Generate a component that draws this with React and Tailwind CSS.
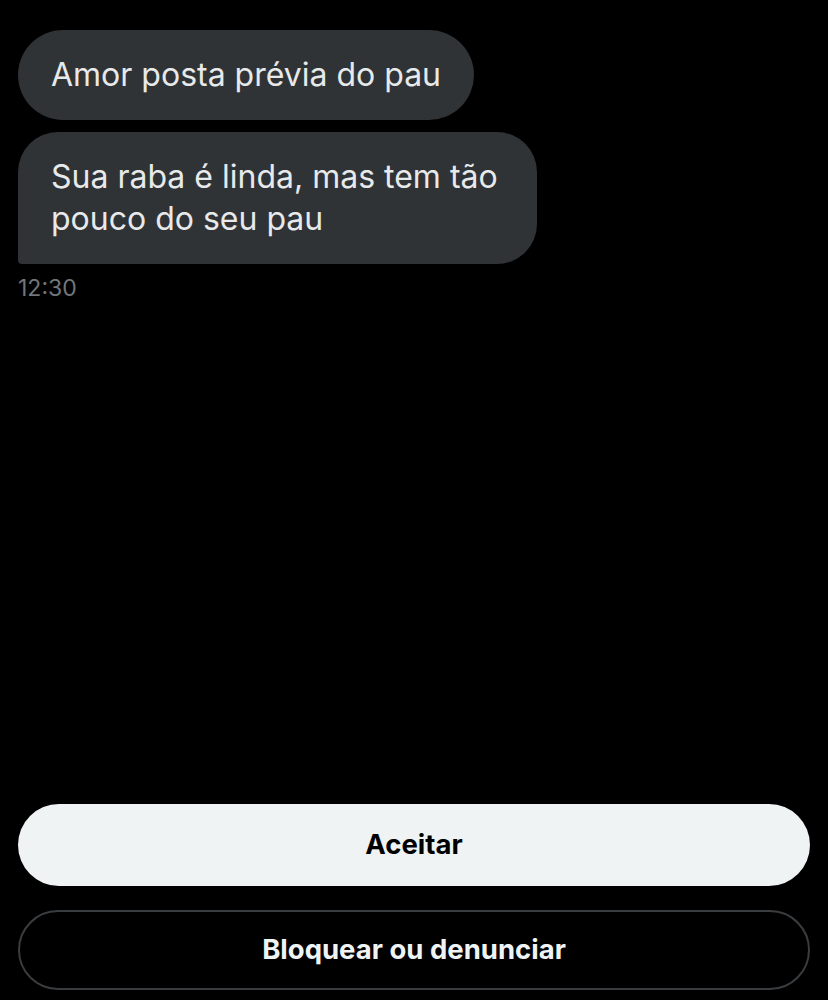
import React from "react";

const messages = [
  { id: 1, text: "Amor posta prévia do pau", last: false },
  { id: 2, text: "Sua raba é linda, mas tem tão pouco do seu pau", last: true },
];

const App = () => {
  return (
    <div className="flex h-[1000px] w-[828px] flex-col bg-black font-['Inter',sans-serif]">
      <div className="flex flex-col items-start gap-3 px-[18px] pt-[30px]">
        {messages.map((msg) => (
          <div
            key={msg.id}
            className={`max-w-[519px] bg-[#2f3336] px-[33px] py-6 text-[32px] leading-[42px] text-[#e7e9ea] ${
              msg.last ? "rounded-[40px] rounded-bl-[4px]" : "rounded-[45px]"
            }`}
          >
            {msg.text}
          </div>
        ))}
        <p className="-mt-[2px] text-[23px] leading-[28px] text-[#71767b]">12:30</p>
      </div>

      <div className="mt-auto flex flex-col gap-6 px-[18px] pb-[10px]">
        <button className="h-[82px] w-full rounded-full bg-[#eff3f4] text-[27.5px] font-bold text-black">
          Aceitar
        </button>
        <button className="h-[80px] w-full rounded-full border-2 border-[#3a3d40] bg-black text-[27.5px] font-bold text-[#eff3f4]">
          Bloquear ou denunciar
        </button>
      </div>
    </div>
  );
};

export default App;
